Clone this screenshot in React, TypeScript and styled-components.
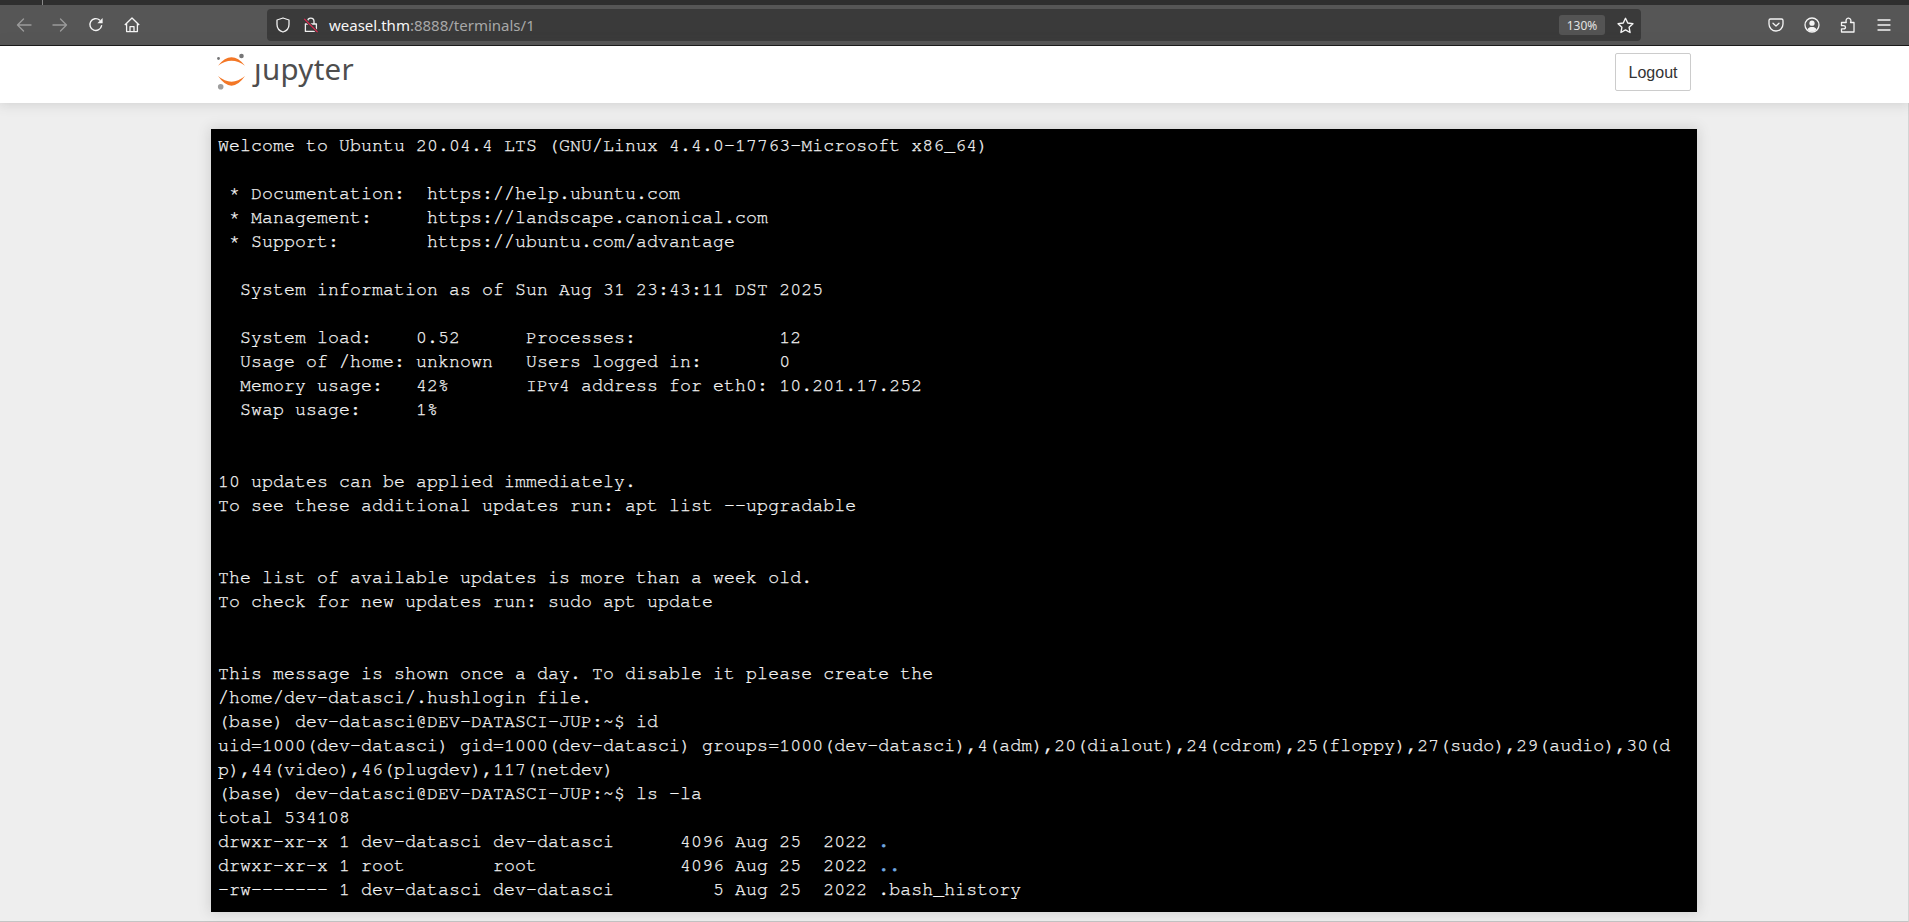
import React from "react";
import styled, { createGlobalStyle } from "styled-components";

const Global = createGlobalStyle`
  html, body { margin: 0; padding: 0; height: 100%; overflow: hidden; background: #eeeeee; }
  #root { height: 100%; }
`;

const Page = styled.div`
  width: 1909px;
  height: 922px;
  display: flex;
  flex-direction: column;
  overflow: hidden;
  background: #eeeeee;
  font-family: "Liberation Sans", Arial, sans-serif;
`;

const TabStrip = styled.div`
  height: 5px;
  background: #2f2f2f;
  flex: none;
  padding-left: 42px;
`;

const TabDivider = styled.div`
  width: 1px;
  height: 5px;
  background: #8a8a8a;
`;

const Toolbar = styled.div`
  height: 40px;
  flex: none;
  display: flex;
  align-items: center;
  background: #565656;
  border-bottom: 1px solid #141414;
  padding-left: 8px;
`;

const NavGroup = styled.div`
  display: flex;
  align-items: center;
  gap: 4px;
  width: 259px;
  flex: none;
`;

const ToolIcon = styled.span<{ $dim?: boolean }>`
  width: 32px;
  height: 32px;
  display: flex;
  align-items: center;
  justify-content: center;
  color: ${(p) => (p.$dim ? "#9a9a9a" : "#f4f4f4")};
  flex: none;
`;

const UrlBar = styled.div`
  width: 1374px;
  height: 32px;
  flex: none;
  background: #3a3a3a;
  border-radius: 4px;
  display: flex;
  align-items: center;
  padding: 0 4px 0 8px;
  box-sizing: border-box;
  font-family: "Noto Sans", sans-serif;
  font-size: 15px;
`;

const UrlIcon = styled.span`
  width: 16px;
  height: 16px;
  display: flex;
  color: #f0f0f0;
  margin-right: 12px;
  flex: none;
`;

const Host = styled.span`
  color: #f6f6f6;
  margin-left: -2px;
`;

const UrlRest = styled.span`
  color: #a8a8a8;
  flex: 1;
`;

const Zoom = styled.span`
  background: #545454;
  color: #e2e2e2;
  border-radius: 3px;
  width: 46px;
  height: 20px;
  display: flex;
  align-items: center;
  justify-content: center;
  font-size: 12px;
  margin-right: 8px;
`;

const StarSlot = styled.span`
  width: 24px;
  height: 32px;
  display: flex;
  align-items: center;
  justify-content: center;
  color: #f4f4f4;
  flex: none;
`;

const RightIcons = styled.div`
  display: flex;
  align-items: center;
  margin-left: 119px;
  gap: 4px;
`;

const Header = styled.header`
  height: 57px;
  flex: none;
  background: #fff;
  box-shadow: 0 0 12px 1px rgba(87, 87, 87, 0.2);
  display: flex;
  align-items: flex-start;
  justify-content: space-between;
  padding: 0 218px 0 215px;
  position: relative;
  z-index: 1;
`;

const Logo = styled.div`
  display: flex;
  align-items: flex-start;
  padding-top: 7px;
`;

const LogoWord = styled.span`
  font-family: "Noto Sans", "Open Sans", sans-serif;
  font-size: 29.5px;
  line-height: 36px;
  color: #4e4e4e;
  margin-left: 7px;
  letter-spacing: 0.3px;
  transform: translateY(-2px);
`;

const LogoutButton = styled.button`
  margin-top: 7px;
  width: 76px;
  height: 38px;
  background: #fff;
  border: 1px solid #cccccc;
  border-radius: 2px;
  color: #333333;
  font-family: "Liberation Sans", Arial, sans-serif;
  font-size: 16px;
  padding: 2px 0 0;
`;

const Body = styled.main`
  flex: 1;
  padding: 26px 0 0 211px;
  border-right: 1px solid #d4d4d4;
  border-bottom: 1px solid #c4c4c4;
  box-sizing: border-box;
`;

const Terminal = styled.pre`
  margin: 0;
  width: 1486px;
  height: 783px;
  box-sizing: border-box;
  padding: 5px 7px;
  background: #000;
  color: #f6f6f6;
  -webkit-text-stroke: 0.25px currentColor;
  box-shadow: 0 0 12px 1px rgba(87, 87, 87, 0.2);
  font-family: "Nimbus Mono PS", "FreeMono", "Liberation Mono", "Courier New", monospace;
  font-size: 18.2px;
  letter-spacing: 0.09px;
  line-height: 24px;
  overflow: hidden;
`;

const Dir = styled.span`
  color: #6fa8e0;
  -webkit-text-stroke: 0.8px currentColor;
`;

const ArrowLeft = () => (
  <svg width="16" height="16" viewBox="0 0 16 16" fill="none" stroke="currentColor" strokeWidth="1.4" strokeLinecap="round" strokeLinejoin="round">
    <path d="M15 8H1.5M7.5 2L1.5 8l6 6" />
  </svg>
);
const ArrowRight = () => (
  <svg width="16" height="16" viewBox="0 0 16 16" fill="none" stroke="currentColor" strokeWidth="1.4" strokeLinecap="round" strokeLinejoin="round">
    <path d="M1 8h13.5M8.5 2l6 6-6 6" />
  </svg>
);
const Reload = () => (
  <svg width="16" height="16" viewBox="0 0 16 16" fill="none">
    <path d="M13.6 8.6A5.9 5.9 0 1 1 11.6 3" stroke="currentColor" strokeWidth="1.4" strokeLinecap="round" />
    <path d="M14.6 1v5.2H9.4z" fill="currentColor" />
  </svg>
);
const Home = () => (
  <svg width="16" height="16" viewBox="0 0 16 16" fill="none" stroke="currentColor" strokeWidth="1.3" strokeLinejoin="round">
    <path d="M.8 8 8 1l7.2 7M2.6 6.6v8h10.8v-8M6 14.6V9.6h4v5" />
  </svg>
);
const Shield = () => (
  <svg width="16" height="16" viewBox="0 0 16 16" fill="none" stroke="currentColor" strokeWidth="1.3" strokeLinejoin="round">
    <path d="M8 1 2 3v4.5C2 11 4.6 14 8 15c3.4-1 6-4 6-7.5V3z" />
  </svg>
);
const BrokenLock = () => (
  <svg width="16" height="16" viewBox="0 0 16 16" fill="none">
    <path d="M4.6 7V4.4a3.2 3.2 0 0 1 6.4 0V7M2.4 7h11v7.4h-11z" stroke="currentColor" strokeWidth="1.3" strokeLinejoin="round" />
    <path d="M1.2 1.8 14.6 15.2" stroke="#3a3a3a" strokeWidth="3" />
    <path d="M1.2 1.8 14.6 15.2" stroke="#e22850" strokeWidth="1.2" />
  </svg>
);
const Star = () => (
  <svg width="17" height="17" viewBox="0 0 16 16" fill="none" stroke="currentColor" strokeWidth="1.3" strokeLinejoin="round">
    <path d="M8 1.2l2.1 4.5 4.9.6-3.6 3.4.9 4.9L8 12.2l-4.3 2.4.9-4.9L1 6.3l4.9-.6z" />
  </svg>
);
const Pocket = () => (
  <svg width="16" height="16" viewBox="0 0 16 16" fill="none" stroke="currentColor" strokeWidth="1.3" strokeLinecap="round" strokeLinejoin="round">
    <path d="M2.5 2h11A1.5 1.5 0 0 1 15 3.5V7A7 7 0 0 1 1 7V3.5A1.5 1.5 0 0 1 2.5 2z" />
    <path d="M5 6.2l3 2.8 3-2.8" />
  </svg>
);
const Account = () => (
  <svg width="16" height="16" viewBox="0 0 16 16" fill="none">
    <circle cx="8" cy="8" r="7" stroke="currentColor" strokeWidth="1.3" />
    <circle cx="8" cy="6.2" r="2.6" fill="currentColor" />
    <path d="M3.4 12.4C4.4 10.6 6 10 8 10s3.6.6 4.6 2.4A6 6 0 0 1 8 14.4a6 6 0 0 1-4.6-2z" fill="currentColor" />
  </svg>
);
const Puzzle = () => (
  <svg width="16" height="16" viewBox="0 0 16 16" fill="none" stroke="currentColor" strokeWidth="1.3" strokeLinejoin="round">
    <path d="M1.5 15H14V5.5H10.5c.9-1.5.5-4-1.8-4.3-2.4-.3-3.2 2.2-2.4 4.3H1.5v3.2h2c1.5 0 2 1 2 1.5s-.5 1.7-2 1.7h-2z" />
  </svg>
);
const Menu = () => (
  <svg width="16" height="16" viewBox="0 0 16 16" fill="none" stroke="currentColor" strokeWidth="1.3" strokeLinecap="round">
    <path d="M2 3h12M2 8h12M2 13h12" />
  </svg>
);

const JupyterMark = () => (
  <svg width="32" height="38" viewBox="0 0 32 38">
    <path d="M3 12.7Q16.5 -4.1 30 12.7Q16.5 2.7 3 12.7z" fill="#f37726" />
    <path d="M3 23Q16.5 42.4 30 23Q16.5 34.4 3 23z" fill="#f37726" />
    <circle cx="26.5" cy="3" r="2.3" fill="#767677" />
    <circle cx="3.5" cy="5.5" r="1.4" fill="#767677" />
    <circle cx="5.7" cy="33.7" r="2.8" fill="#9e9e9e" />
  </svg>
);

const lines = `Welcome to Ubuntu 20.04.4 LTS (GNU/Linux 4.4.0-17763-Microsoft x86_64)

 * Documentation:  https://help.ubuntu.com
 * Management:     https://landscape.canonical.com
 * Support:        https://ubuntu.com/advantage

  System information as of Sun Aug 31 23:43:11 DST 2025

  System load:    0.52      Processes:             12
  Usage of /home: unknown   Users logged in:       0
  Memory usage:   42%       IPv4 address for eth0: 10.201.17.252
  Swap usage:     1%


10 updates can be applied immediately.
To see these additional updates run: apt list --upgradable


The list of available updates is more than a week old.
To check for new updates run: sudo apt update


This message is shown once a day. To disable it please create the
/home/dev-datasci/.hushlogin file.
(base) dev-datasci@DEV-DATASCI-JUP:~$ id
uid=1000(dev-datasci) gid=1000(dev-datasci) groups=1000(dev-datasci),4(adm),20(dialout),24(cdrom),25(floppy),27(sudo),29(audio),30(d
p),44(video),46(plugdev),117(netdev)
(base) dev-datasci@DEV-DATASCI-JUP:~$ ls -la
total 534108
`;

export default function App() {
  return (
    <Page>
      <Global />
      <TabStrip><TabDivider /></TabStrip>
      <Toolbar>
        <NavGroup>
          <ToolIcon $dim><ArrowLeft /></ToolIcon>
          <ToolIcon $dim><ArrowRight /></ToolIcon>
          <ToolIcon><Reload /></ToolIcon>
          <ToolIcon><Home /></ToolIcon>
        </NavGroup>
        <UrlBar>
          <UrlIcon><Shield /></UrlIcon>
          <UrlIcon><BrokenLock /></UrlIcon>
          <Host>weasel.thm</Host>
          <UrlRest>:8888/terminals/1</UrlRest>
          <Zoom>130%</Zoom>
          <StarSlot><Star /></StarSlot>
        </UrlBar>
        <RightIcons>
          <ToolIcon><Pocket /></ToolIcon>
          <ToolIcon><Account /></ToolIcon>
          <ToolIcon><Puzzle /></ToolIcon>
          <ToolIcon><Menu /></ToolIcon>
        </RightIcons>
      </Toolbar>
      <Header>
        <Logo>
          <JupyterMark />
          <LogoWord>ȷupyter</LogoWord>
        </Logo>
        <LogoutButton>Logout</LogoutButton>
      </Header>
      <Body>
        <Terminal>
          {lines}
          {"drwxr-xr-x 1 dev-datasci dev-datasci      4096 Aug 25  2022 "}<Dir>.</Dir>{"\n"}
          {"drwxr-xr-x 1 root        root             4096 Aug 25  2022 "}<Dir>..</Dir>{"\n"}
          {"-rw------- 1 dev-datasci dev-datasci         5 Aug 25  2022 .bash_history"}
        </Terminal>
      </Body>
    </Page>
  );
}
